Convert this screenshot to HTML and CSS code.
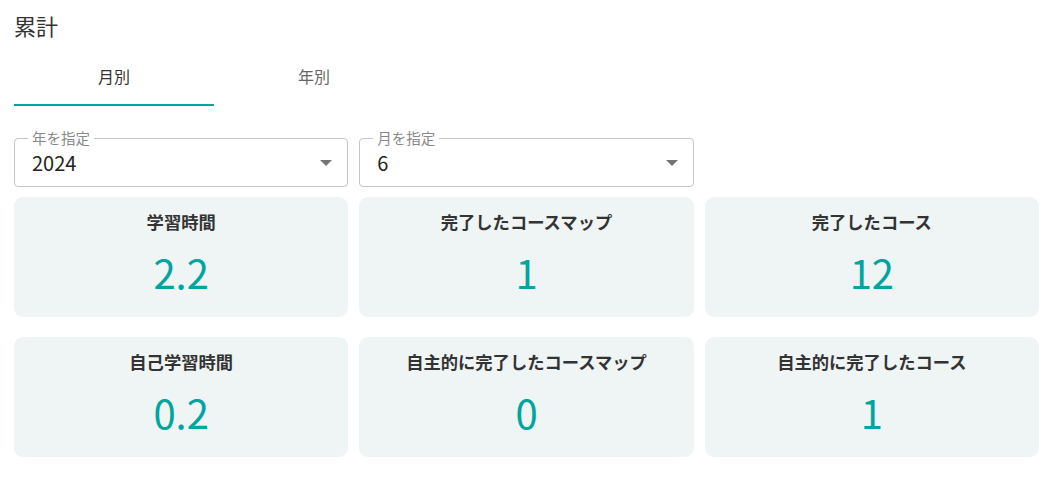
FILE: index.html
```html
<!DOCTYPE html>
<html lang="ja">
<head>
<meta charset="utf-8">
<title>累計</title>
<link rel="stylesheet" href="styles.css">
</head>
<body>
<div class="page">
  <h2 class="title">累計</h2>
  <div class="tabs">
    <div class="tab tab-active">月別</div>
    <div class="tab">年別</div>
  </div>
  <div class="selects">
    <div class="select">
      <span class="select-label">年を指定</span>
      <span class="select-value">2024</span>
      <svg class="select-arrow" viewBox="0 0 10 5" width="12" height="6"><path d="M0 0 L5 5 L10 0 Z" fill="#757575"/></svg>
    </div>
    <div class="select">
      <span class="select-label">月を指定</span>
      <span class="select-value">6</span>
      <svg class="select-arrow" viewBox="0 0 10 5" width="12" height="6"><path d="M0 0 L5 5 L10 0 Z" fill="#757575"/></svg>
    </div>
  </div>
  <div class="cards">
    <div class="card"><div class="card-title">学習時間</div><div class="card-value">2.2</div></div>
    <div class="card"><div class="card-title">完了したコースマップ</div><div class="card-value">1</div></div>
    <div class="card"><div class="card-title">完了したコース</div><div class="card-value">12</div></div>
    <div class="card"><div class="card-title">自己学習時間</div><div class="card-value">0.2</div></div>
    <div class="card"><div class="card-title">自主的に完了したコースマップ</div><div class="card-value">0</div></div>
    <div class="card"><div class="card-title">自主的に完了したコース</div><div class="card-value">1</div></div>
  </div>
</div>
</body>
</html>
```
FILE: styles.css
```css
* { box-sizing: border-box; }
html, body { margin: 0; padding: 0; background: #fff; }
body {
  font-family: "Noto Sans CJK JP", "Noto Sans", sans-serif;
  color: #333;
}
.page {
  width: 1025px;
  margin-left: 14px;
  padding-top: 9px;
}
.title {
  margin: 0;
  font-size: 22px;
  line-height: 32px;
  font-weight: 400;
  color: #333;
}
.tabs {
  display: flex;
  margin-top: 17px;
}
.tab {
  width: 200px;
  height: 48px;
  padding-top: 8px;
  text-align: center;
  font-size: 16px;
  line-height: 20px;
  color: #666;
  border-bottom: 2px solid transparent;
}
.tab-active {
  color: #333;
  border-bottom-color: #00a8a3;
}
.selects {
  display: grid;
  grid-template-columns: repeat(3, 1fr);
  column-gap: 11px;
  margin-top: 32px;
}
.select {
  position: relative;
  height: 49px;
  border: 1px solid #c4c4c4;
  border-radius: 4px;
  display: flex;
  align-items: center;
  padding-left: 17px;
  padding-right: 15px;
}
.select-label {
  position: absolute;
  left: 13px;
  top: -9px;
  padding: 0 4px;
  background: #fff;
  font-size: 14.5px;
  line-height: 16px;
  color: #888;
}
.select-value {
  flex: 1;
  font-size: 20px;
  line-height: 24px;
  color: #222;
}
.select-arrow { display: block; }
.cards {
  display: grid;
  grid-template-columns: repeat(3, 1fr);
  column-gap: 11px;
  row-gap: 20px;
  margin-top: 10px;
}
.card {
  height: 120px;
  background: #eff4f4;
  border-radius: 9px;
  text-align: center;
  padding-top: 13px;
}
.card-title {
  font-size: 17.3px;
  line-height: 24px;
  font-weight: 700;
  color: #333;
}
.card-value {
  margin-top: 14px;
  font-size: 40px;
  line-height: 48px;
  color: #00a5a0;
}
```
